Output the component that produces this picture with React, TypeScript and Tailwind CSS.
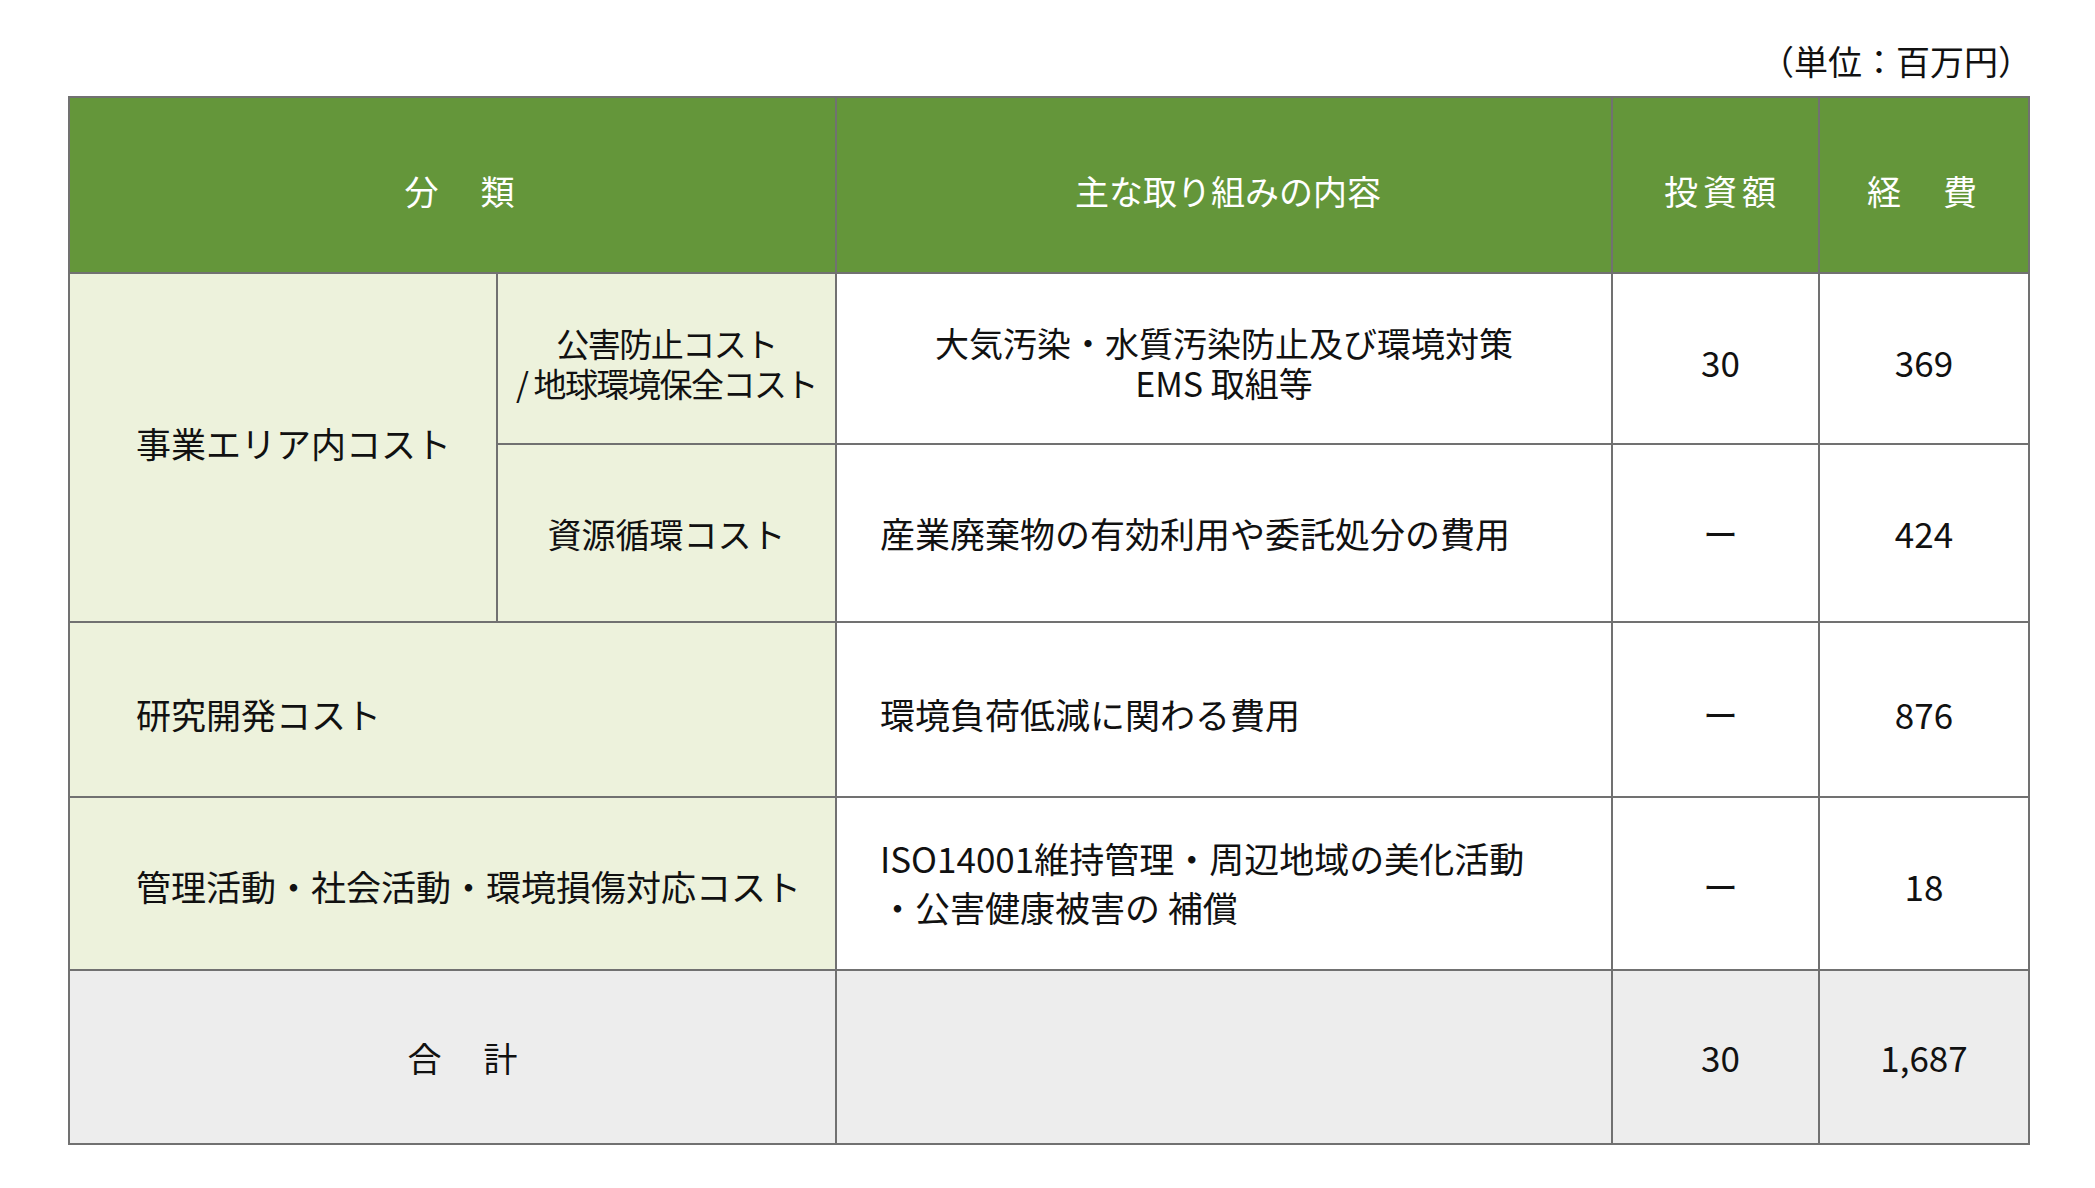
const cell = 'border-2 border-[#717171] p-0 align-middle';
const light = 'bg-[#edf2dc]';
const num = 'text-center text-[35px]';

function CostTable() {
    return (
        <table className="w-[1960px] table-fixed border-collapse text-[35px] text-[#111]">
            <colgroup>
                <col className="w-[428px]" />
                <col className="w-[339px]" />
                <col className="w-[776px]" />
                <col className="w-[207px]" />
                <col className="w-[210px]" />
            </colgroup>
            <thead>
                <tr className="h-[176px] bg-[#64963a] text-[34px] text-white">
                    <th colSpan={2} className={`${cell} pt-[10px] pl-[18px] text-center font-normal tracking-[4px]`}>
                        分　類
                    </th>
                    <th className={`${cell} pt-[10px] pl-[8px] text-center font-normal`}>主な取り組みの内容</th>
                    <th className={`${cell} pt-[10px] pl-[14px] text-center font-normal tracking-[5px]`}>投資額</th>
                    <th className={`${cell} pt-[10px] text-center font-normal tracking-[4px]`}>経　費</th>
                </tr>
            </thead>
            <tbody>
                <tr className="h-[171px]">
                    <td rowSpan={2} className={`${cell} ${light} pl-[66px] pb-[8px] text-left`}>事業エリア内コスト</td>
                    <td className={`${cell} ${light} pt-[8px] text-center text-[33px] leading-[40px] tracking-[-1.5px]`}>
                        公害防止コスト
                        <br />/ 地球環境保全コスト
                    </td>
                    <td className={`${cell} pt-[8px] text-center text-[34px] leading-[40px]`}>
                        大気汚染・水質汚染防止及び環境対策
                        <br />
                        EMS 取組等
                    </td>
                    <td className={`${cell} ${num} pt-[8px] pl-[10px]`}>30</td>
                    <td className={`${cell} ${num} pt-[8px]`}>369</td>
                </tr>
                <tr className="h-[178px]">
                    <td className={`${cell} ${light} text-center text-[34px]`}>資源循環コスト</td>
                    <td className={`${cell} pl-[43px] text-left`}>産業廃棄物の有効利用や委託処分の費用</td>
                    <td className={`${cell} ${num} pl-[10px]`}>ー</td>
                    <td className={`${cell} ${num}`}>424</td>
                </tr>
                <tr className="h-[175px]">
                    <td colSpan={2} className={`${cell} ${light} pl-[66px] pt-[10px] text-left`}>研究開発コスト</td>
                    <td className={`${cell} pl-[43px] pt-[10px] text-left`}>環境負荷低減に関わる費用</td>
                    <td className={`${cell} ${num} pt-[10px] pl-[10px]`}>ー</td>
                    <td className={`${cell} ${num} pt-[10px]`}>876</td>
                </tr>
                <tr className="h-[173px]">
                    <td colSpan={2} className={`${cell} ${light} pl-[66px] pt-[5px] text-left`}>
                        管理活動・社会活動・環境損傷対応コスト
                    </td>
                    <td className={`${cell} pl-[43px] pb-[4px] text-left leading-[49px]`}>
                        ISO14001維持管理・周辺地域の美化活動
                        <br />・公害健康被害の 補償
                    </td>
                    <td className={`${cell} ${num} pt-[5px] pl-[10px]`}>ー</td>
                    <td className={`${cell} ${num} pt-[5px]`}>18</td>
                </tr>
                <tr className="h-[174px] bg-[#ededed]">
                    <td colSpan={2} className={`${cell} pl-[24px] text-center text-[34px] tracking-[4px]`}>合　計</td>
                    <td className={cell}></td>
                    <td className={`${cell} ${num} pl-[10px]`}>30</td>
                    <td className={`${cell} ${num}`}>1,687</td>
                </tr>
            </tbody>
        </table>
    );
}

export default function App() {
    return (
        <div className="min-h-screen bg-white px-[68px] pt-[41px] font-['Noto_Sans_CJK_JP',sans-serif]">
            <p className="mb-[15px] w-[1964px] text-right text-[34px] leading-[40px] text-[#111]">（単位：百万円）</p>
            <CostTable />
        </div>
    );
}
